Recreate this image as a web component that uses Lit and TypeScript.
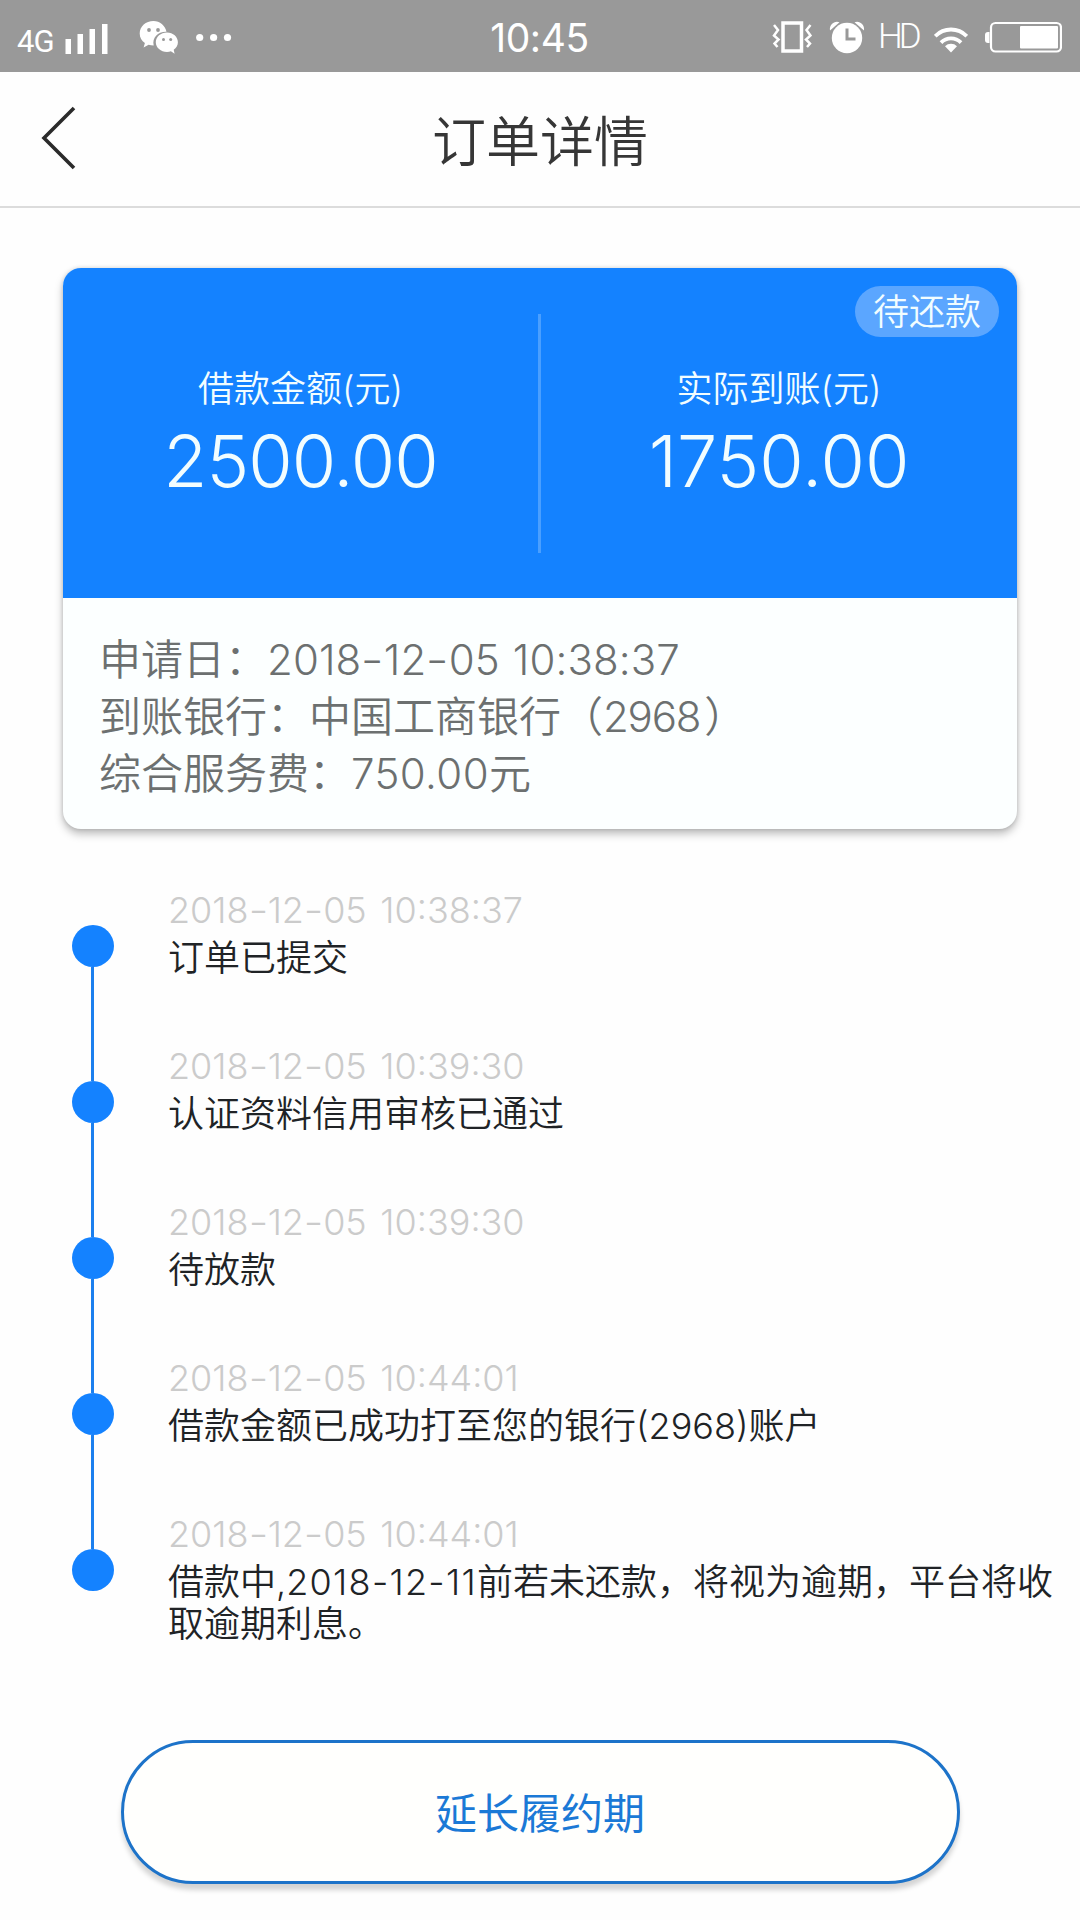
import { LitElement, html, css } from "lit";
import { customElement } from "lit/decorators.js";

interface Step {
  time: string;
  text: unknown;
}

const STEPS: Step[] = [
  { time: "2018-12-05 10:38:37", text: "订单已提交" },
  { time: "2018-12-05 10:39:30", text: "认证资料信用审核已通过" },
  { time: "2018-12-05 10:39:30", text: "待放款" },
  { time: "2018-12-05 10:44:01", text: "借款金额已成功打至您的银行(2968)账户" },
  {
    time: "2018-12-05 10:44:01",
    text: html`借款中,<span class="due">2018-12-11</span>前若未还款，将视为逾期，平台将收取逾期利息。`,
  },
];

// Hyphens are drawn a little wider than the font's own, with even gaps around them.
const dashed = (value: string) =>
  value.split("-").map((part, i) => (i === 0 ? part : html`<span class="dash">-</span>${part}`));

const dashStyles = css`
  .dash { display: inline-block; padding: 0 0.04em; transform: scaleX(1.2); }
`;

@customElement("status-bar")
export class StatusBar extends LitElement {
  static styles = css`
    :host { display: block; }
    .bar {
      display: grid;
      grid-template-columns: 1fr auto 1fr;
      align-items: center;
      height: 72px;
      box-sizing: border-box;
      padding: 0 18px 0 17px;
      background: #999;
      color: #fff;
      font-family: Inter, "Noto Sans CJK SC", sans-serif;
    }
    .side { display: flex; align-items: center; height: 72px; }
    .right { justify-content: flex-end; }
    .net { font-family: Roboto, sans-serif; font-size: 31px; line-height: 30px; letter-spacing: -1px; padding-top: 10px; width: 48px; }
    .clock { font-size: 39px; line-height: 72px; padding-top: 2px; font-weight: 400; letter-spacing: -0.4px; }
    .hd { font-family: Roboto, sans-serif; font-size: 35px; line-height: 72px; font-weight: 300; letter-spacing: -4px; width: 42px; margin: 0 14px 0 13px; }
    svg { display: block; flex: none; }
    .wechat { margin-left: 31px; }
    .dots { margin-left: 17px; }
    .alarm { margin-left: 17px; }
    .battery { margin-left: 17px; }
  `;

  render() {
    return html`
      <div class="bar">
        <div class="side">
          <span class="net">4G</span>
          <svg width="43" height="72" viewBox="65 0 43 72" fill="#fff">
            <rect x="65.500" y="38" width="5.500" height="15" />
            <rect x="77.500" y="33" width="5.500" height="20" />
            <rect x="89.500" y="28" width="5.500" height="25" />
            <rect x="102" y="23" width="5.500" height="30" />
          </svg>
          <svg class="wechat" width="40" height="72" viewBox="139 0 40 72" fill="#fff">
            <path d="M153.500 20c-7.700 0-13.800 5.500-13.800 12.400 0 4 2 7.400 5.200 9.700l-1.300 4.300 5-2.600c1.600.5 3.300.7 5.100.7-1.900-8 4.500-14 12.800-13.700-1.200-6.200-6.700-10.800-13-10.800z" />
            <path d="M167 31.500c-6.300 0-11.200 4.300-11.200 9.700s5 9.700 11.200 9.700c1.400 0 2.700-.2 3.900-.6l3.700 2.500-.9-4c2.600-1.800 4.200-4.500 4.200-7.600 0-5.400-4.800-9.700-10.900-9.700z" />
            <g fill="#999">
              <circle cx="149" cy="29" r="1.900" />
              <circle cx="158" cy="29" r="1.900" />
              <circle cx="163.500" cy="38.500" r="1.500" />
              <circle cx="170.700" cy="38.500" r="1.500" />
            </g>
          </svg>
          <svg class="dots" width="36" height="72" viewBox="196 0 36 72" fill="#fff">
            <circle cx="199.700" cy="36.500" r="3.600" />
            <circle cx="213.600" cy="36.500" r="3.600" />
            <circle cx="227.500" cy="36.500" r="3.600" />
          </svg>
        </div>
        <div class="clock">10:45</div>
        <div class="side right">
          <svg width="40" height="72" viewBox="771 0 40 72" fill="none" stroke="#fff">
            <rect x="782" y="22" width="18.500" height="28" stroke-width="3.500" />
            <path d="M773 24l4 5-4 5.500 4.500 4-4 4 3 3.500M809.500 24l-4 5 4 5.500-4.500 4 4 4-3 3.500" stroke-width="2.500" />
          </svg>
          <svg class="alarm" width="36" height="72" viewBox="829 0 36 72" fill="#fff">
            <circle cx="847" cy="37" r="15.200" />
            <path d="M830 29.500c-1-6 5-10.500 9.500-8.200zM864 29.500c1-6-5-10.500-9.500-8.200z" />
            <path d="M847 27.500v10.500h8.500" fill="none" stroke="#999" stroke-width="3" />
          </svg>
          <span class="hd">HD</span>
          <svg width="34" height="72" viewBox="934 0 34 72">
            <g fill="none" stroke="#fff" stroke-width="3.800">
              <path d="M935.200 35.200a22 22 0 0 1 31.600 0" />
              <path d="M941 41.600a14 14 0 0 1 20 0" />
            </g>
            <path d="M951 51.500l-6-6.300a8.500 8.500 0 0 1 12 0z" fill="#fff" />
          </svg>
          <svg class="battery" width="77" height="72" viewBox="985 0 77 72" fill="#fff">
            <path d="M989.500 31v11h-1.500a3 3 0 0 1-3-3v-5a3 3 0 0 1 3-3z" />
            <rect x="991" y="22" width="70" height="28.500" rx="4.500" fill="none" stroke="#fff" stroke-width="2.200" />
            <rect x="1020" y="25" width="38" height="22.500" rx="1" />
          </svg>
        </div>
      </div>
    `;
  }
}

@customElement("order-card")
export class OrderCard extends LitElement {
  static styles = [
    dashStyles,
    css`
      :host { display: block; }
      .card {
        border-radius: 18px;
        background: #fcffff;
        box-shadow: 0 5px 9px rgba(0, 0, 0, 0.26), 0 0 4px rgba(0, 0, 0, 0.14);
        overflow: hidden;
        height: 561px;
        font-family: Inter, "Noto Sans CJK SC", sans-serif;
      }
      .top {
        position: relative;
        display: grid;
        grid-template-columns: 475px 3px 1fr;
        align-items: center;
        height: 330px;
        background: #1482ff;
        color: #f2fdff;
      }
      .badge {
        position: absolute;
        right: 18px;
        top: 18px;
        width: 144px;
        height: 51px;
        line-height: 53px;
        border-radius: 26px;
        text-align: center;
        background: #5ba6ff;
        font-size: 36px;
        font-weight: 350;
      }
      .column { display: flex; flex-direction: column; align-items: center; padding-top: 2px; }
      .divider { width: 3px; height: 239px; background: #4a9fff; }
      .label { font-size: 36px; line-height: 54px; font-weight: 350; white-space: nowrap; }
      .amount { font-size: 72px; line-height: 90px; font-weight: 300; white-space: nowrap; }
      .tight { letter-spacing: -1px; }
      .details {
        padding: 33px 36px;
        font-size: 42px;
        line-height: 57px;
        font-weight: 350;
        color: #6c7070;
        white-space: nowrap;
      }
      .date { word-spacing: 1px; letter-spacing: 0.1px; font-weight: 300; }
      .tail { letter-spacing: -1.2px; padding-right: 4px; font-weight: 300; }
      .fee { font-weight: 300; letter-spacing: 0.4px; }
    `,
  ];

  render() {
    return html`
      <div class="card">
        <div class="top">
          <div class="column">
            <div class="label">借款金额(元)</div>
            <div class="amount tight">2500.00</div>
          </div>
          <div class="divider"></div>
          <div class="column">
            <div class="label">实际到账(元)</div>
            <div class="amount">1750.00</div>
          </div>
          <div class="badge">待还款</div>
        </div>
        <div class="details">
          <div>申请日：<span class="date">${dashed("2018-12-05 10:38:37")}</span></div>
          <div>到账银行：中国工商银行（<span class="tail">2968</span>）</div>
          <div>综合服务费：<span class="fee">750.00</span>元</div>
        </div>
      </div>
    `;
  }
}

@customElement("order-timeline")
export class OrderTimeline extends LitElement {
  static styles = [
    dashStyles,
    css`
      :host { display: block; }
      .list { font-family: Inter, "Noto Sans CJK SC", sans-serif; font-size: 36px; }
      .step { display: grid; grid-template-columns: 42px 1fr; column-gap: 54px; min-height: 156px; }
      .rail { display: flex; flex-direction: column; align-items: center; }
      .lead, .tail { width: 3px; margin-right: 1px; background: #1b7fee; }
      .lead { height: 41px; flex: none; }
      .tail { flex: 1; }
      .step:first-child .lead, .step:last-child .tail { background: transparent; }
      .dot { width: 42px; height: 42px; flex: none; border-radius: 50%; background: #1482ff; }
      .time { line-height: 52px; font-weight: 300; color: #cbcbcb; word-spacing: 3.5px; }
      .text { line-height: 42px; padding-top: 1px; font-weight: 350; color: #202326; }
      .due { letter-spacing: 1.3px; }
    `,
  ];

  render() {
    return html`
      <div class="list">
        ${STEPS.map(
          (s) => html`
            <div class="step">
              <div class="rail">
                <div class="lead"></div>
                <div class="dot"></div>
                <div class="tail"></div>
              </div>
              <div>
                <div class="time">${dashed(s.time)}</div>
                <div class="text">${s.text}</div>
              </div>
            </div>
          `
        )}
      </div>
    `;
  }
}

@customElement("app-root")
export class AppRoot extends LitElement {
  static styles = css`
    :host { display: block; }
    .page {
      height: 1920px;
      overflow: hidden;
      background: #fefefe;
      font-family: Inter, "Noto Sans CJK SC", sans-serif;
    }
    .header {
      display: grid;
      grid-template-columns: 100px 1fr 100px;
      align-items: center;
      height: 136px;
      box-sizing: border-box;
      border-bottom: 2px solid #dcdcdc;
    }
    .back { display: block; margin: 0 0 2px 40px; }
    .title { text-align: center; font-size: 54px; line-height: 126px; padding-top: 8px; font-weight: 350; color: #363636; }
    .card { margin: 60px 63px 0; }
    .steps { margin: 55px 20px 0 72px; }
    .button {
      display: block;
      width: 839px;
      height: 144px;
      margin: 76px auto 0;
      padding: 0 0 4px;
      box-sizing: border-box;
      border: 3px solid #1d73c9;
      border-radius: 72px;
      background: #fffffd;
      box-shadow: 0 6px 5px rgba(0, 0, 0, 0.17);
      color: #1b79d6;
      font-family: inherit;
      font-size: 42px;
      font-weight: 400;
    }
  `;

  render() {
    return html`
      <div class="page">
        <status-bar></status-bar>
        <div class="header">
          <svg class="back" width="40" height="68" viewBox="40 104 40 68" fill="none">
            <path d="M74 108L44 138L74 168" stroke="#2b2b2b" stroke-width="3.600" />
          </svg>
          <div class="title">订单详情</div>
        </div>
        <order-card class="card"></order-card>
        <order-timeline class="steps"></order-timeline>
        <button class="button">延长履约期</button>
      </div>
    `;
  }
}
